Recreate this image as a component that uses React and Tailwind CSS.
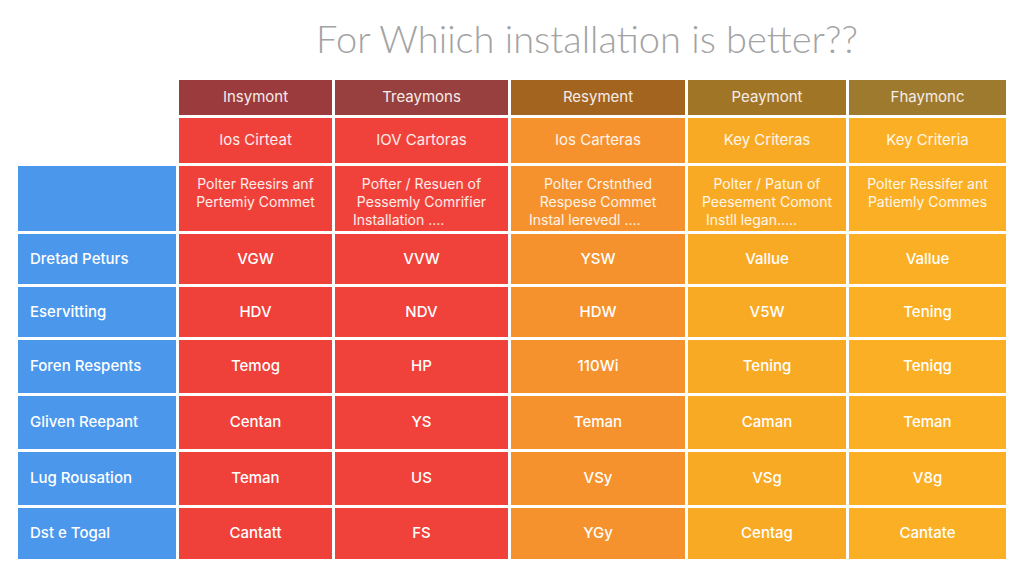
import React from 'react';

const cols = [
    { head: "Insymont", bgHead: "bg-[#9b3b3e]", bg: "bg-[#f0403a]" },
    { head: "Treaymons", bgHead: "bg-[#98403f]", bg: "bg-[#f0423a]" },
    { head: "Resyment", bgHead: "bg-[#a3641f]", bg: "bg-[#f5922d]" },
    { head: "Peaymont", bgHead: "bg-[#a07526]", bg: "bg-[#f9aa25]" },
    { head: "Fhaymonc", bgHead: "bg-[#9e7a2e]", bg: "bg-[#fbaf24]" },
];

const criteria = ["Ios Cirteat", "IOV Cartoras", "Ios Carteras", "Key Criteras", "Key Criteria"];

const notes = [
    ["Polter Reesirs anf", "Pertemiy Commet"],
    ["Pofter / Resuen of", "Pessemly Comrifier", "Installation ...."],
    ["Polter Crstnthed", "Respese Commet", "Instal lerevedl ...."],
    ["Polter / Patun of", "Peesement Comont", "Instll legan....."],
    ["Polter Ressifer ant", "Patiemly Commes"],
];

const rows = [
    { label: "Dretad Peturs", h: "h-[50px]", cells: ["VGW", "VVW", "YSW", "Vallue", "Vallue"] },
    { label: "Eservitting", h: "h-[50px]", cells: ["HDV", "NDV", "HDW", "V5W", "Tening"] },
    { label: "Foren Respents", h: "h-[53px]", cells: ["Temog", "HP", "110Wi", "Tening", "Teniqg"] },
    { label: "Gliven Reepant", h: "h-[53px]", cells: ["Centan", "YS", "Teman", "Caman", "Teman"] },
    { label: "Lug Rousation", h: "h-[53px]", cells: ["Teman", "US", "VSy", "VSg", "V8g"] },
    { label: "Dst e Togal", h: "h-[51px]", cells: ["Cantatt", "FS", "YGy", "Centag", "Cantate"] },
];

const App = () => {
    return (
        <div className="w-[1024px] h-[576px] bg-white overflow-hidden font-['Inter','Liberation_Sans',sans-serif]">
            {/* Title */}
            <div className="pl-[170px] pr-[20px] pt-[13px] h-[80px] text-center">
                <div className="font-['Lato','Open_Sans',sans-serif] font-light text-[38px] leading-[50px] text-[#a3a3a3]">
                    For Whiich installation is better??
                </div>
            </div>

            {/* Table */}
            <div className="ml-[18px] grid grid-cols-[158px_153px_173px_174px_158px_157px] gap-[3px] text-white text-[15px]">
                {/* header row */}
                <div className="h-[35px]" />
                {cols.map((c, i) => (
                    <div key={i} className={`h-[35px] ${c.bgHead} flex items-center justify-center text-[#f6ece8]`}>
                        {c.head}
                    </div>
                ))}

                {/* criteria row */}
                <div className="h-[45px]" />
                {cols.map((c, i) => (
                    <div key={i} className={`h-[45px] ${c.bg} flex items-center justify-center text-white/90`}>
                        {criteria[i]}
                    </div>
                ))}

                {/* notes row */}
                <div className="h-[65px] bg-[#4a97ec]" />
                {cols.map((c, i) => (
                    <div key={i} className={`h-[65px] ${c.bg} flex flex-col items-center justify-start pt-[9px] text-[14px] leading-[18px] text-white/90`}>
                        {notes[i].map((line, j) => (
                            <div key={j} className={j === 2 ? "self-start pl-[18px]" : ""}>{line}</div>
                        ))}
                    </div>
                ))}

                {rows.map((r, ri) => (
                    <React.Fragment key={ri}>
                        <div className={`${r.h} bg-[#4a97ec] flex items-center pl-[12px] font-medium`}>
                            {r.label}
                        </div>
                        {cols.map((c, i) => (
                            <div key={i} className={`${r.h} ${c.bg} flex items-center justify-center font-medium`}>
                                {r.cells[i]}
                            </div>
                        ))}
                    </React.Fragment>
                ))}
            </div>
        </div>
    );
};

export default App;
